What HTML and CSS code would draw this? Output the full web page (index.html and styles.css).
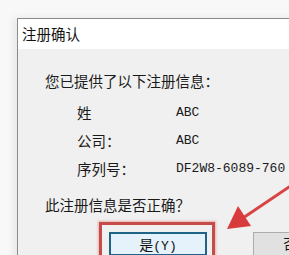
FILE: index.html
```html
<!DOCTYPE html>
<html>

<head>
    <title>注册确认</title>
    <link rel="stylesheet" href="styles.css">
</head>

<body>
    <div class="screen">
        <div class="dialog">
            <div class="title-bar">注册确认</div>
            <div class="dialog-body">
                <div class="lead">您已提供了以下注册信息：</div>

                <div class="info">
                    <div class="label">姓</div>
                    <div class="value">ABC</div>
                    <div class="label">公司：</div>
                    <div class="value">ABC</div>
                    <div class="label">序列号：</div>
                    <div class="value">DF2W8-6089-760</div>
                </div>

                <div class="question">此注册信息是否正确？</div>

                <div class="buttons">
                    <div class="highlight">
                        <button class="btn btn-default">是<span class="mono">(Y)</span></button>
                    </div>
                    <button class="btn">否<span class="mono">(N)</span></button>
                </div>
            </div>
        </div>

        <!-- red annotation arrow -->
        <svg class="arrow" width="289" height="255" viewBox="0 0 289 255">
            <line x1="292" y1="185" x2="240" y2="220" stroke="#d84444" stroke-width="3" />
            <polygon points="227,229 238,206 251,226" fill="#d83b3b" />
        </svg>
    </div>
</body>

</html>
```

FILE: styles.css
```css
/* reset */
html, body {
  margin: 0;
  padding: 0;
}

body {
  background-color: #f8f8f8;
  font-family: "Noto Sans CJK SC", "Liberation Sans", sans-serif;
  color: #1a1a1a;
  overflow: hidden;
}

.screen {
  position: relative;
  width: 289px;
  height: 255px;
  overflow: hidden;
}

/* the dialog window, cut off on the right and bottom */
.dialog {
  margin: 18px 0 0 17px;
  width: 380px;
  height: 260px;
  border-top: 1px solid #8c8c8c;
  border-left: 1px solid #8c8c8c;
  box-shadow: -3px 0 8px rgba(0, 0, 0, 0.08);
  background-color: #f0f0f0;
}

.title-bar {
  height: 30px;
  line-height: 30px;
  padding-left: 4px;
  background-color: #fff;
  font-size: 14.5px;
  color: #111;
}

.dialog-body {
  padding: 22px 0 0 27px;
  font-size: 14.5px;
}

.lead {
  line-height: 20px;
}

/* name / company / serial */
.info {
  display: grid;
  grid-template-columns: 99px auto;
  grid-auto-rows: 28px;
  align-items: center;
  margin: 7px 0 0 32px;
}

.value {
  font-family: "Liberation Mono", monospace;
  font-size: 13px;
}

.question {
  margin-top: 13px;
  line-height: 20px;
}

.buttons {
  display: flex;
  align-items: flex-start;
  margin: 7px 0 0 54px;
}

/* red box around the yes button */
.highlight {
  flex-shrink: 0;
  padding: 7px 5px 20px 7px;
  border: 3px solid #c64c4a;
  box-shadow: 0 0 2px 1px rgba(230, 130, 130, 0.6);
}

.btn {
  flex-shrink: 0;
  width: 98px;
  height: 24px;
  padding: 0;
  border: 1px solid #adadad;
  background-color: #e1e1e1;
  font-family: "Noto Sans CJK SC", sans-serif;
  font-size: 14px;
  color: #111;
  line-height: 20px;
}

.btn-default {
  border: 2px solid #1f6488;
  background-color: #e5f1fb;
}

.buttons > .btn {
  margin: 10px 0 0 38px;
}

.mono {
  font-family: "Liberation Mono", monospace;
  font-size: 13px;
}

.arrow {
  position: absolute;
  left: 0;
  top: 0;
}
```
